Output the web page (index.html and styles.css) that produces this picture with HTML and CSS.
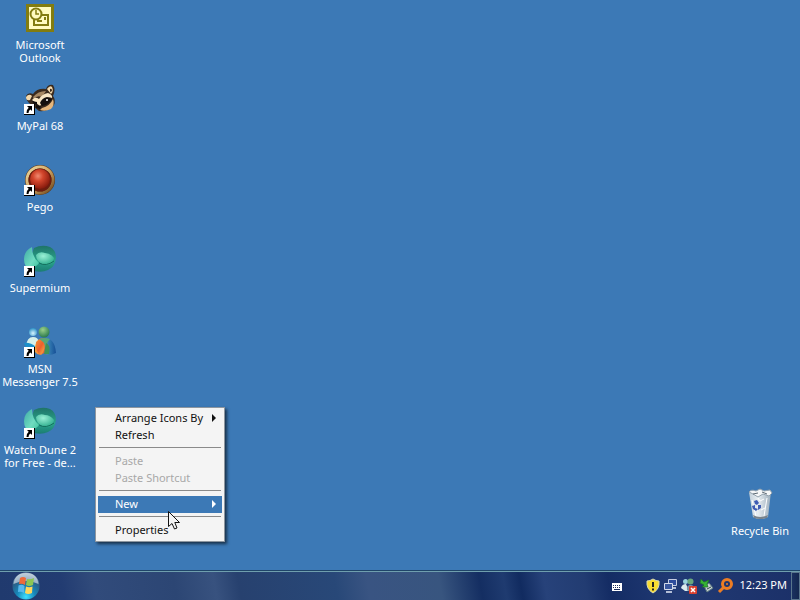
FILE: index.html
```html
<!DOCTYPE html>
<html lang="en">
<head>
<meta charset="utf-8">
<title>Desktop</title>
<link rel="stylesheet" href="styles.css">
</head>
<body>
<svg class="defs" aria-hidden="true">
  <defs>
    <radialGradient id="redBall" cx="40%" cy="35%" r="65%"><stop offset="0" stop-color="#f08a70"/><stop offset=".4" stop-color="#d3462c"/><stop offset="1" stop-color="#8a1c0e"/></radialGradient>
    <linearGradient id="ring" x1="0" y1="0" x2="1" y2="1"><stop offset="0" stop-color="#ecd9a0"/><stop offset=".5" stop-color="#cfa463"/><stop offset="1" stop-color="#6a4218"/></linearGradient>
    <linearGradient id="teal" x1="0" y1="0" x2="0" y2="1"><stop offset="0" stop-color="#1f7468"/><stop offset=".6" stop-color="#2aa48c"/><stop offset="1" stop-color="#1b7d72"/></linearGradient>
    <linearGradient id="leaf" x1="0" y1="0" x2="1" y2="1"><stop offset="0" stop-color="#3fa9a6"/><stop offset=".6" stop-color="#6fdcc0"/><stop offset="1" stop-color="#3cc39c"/></linearGradient>
    <radialGradient id="mint" cx="40%" cy="30%" r="70%"><stop offset="0" stop-color="#9af0d6"/><stop offset="1" stop-color="#2fae8e"/></radialGradient>
    <radialGradient id="greenHead" cx="40%" cy="30%" r="70%"><stop offset="0" stop-color="#9bd08a"/><stop offset="1" stop-color="#2b7a4c"/></radialGradient>
    <radialGradient id="blueHead" cx="50%" cy="65%" r="65%"><stop offset="0" stop-color="#d8f4ff"/><stop offset="1" stop-color="#2b8fc4"/></radialGradient>
    <linearGradient id="person" x1="0" y1="0" x2="1" y2="0"><stop offset="0" stop-color="#f6a33a"/><stop offset=".4" stop-color="#f0622a"/><stop offset=".6" stop-color="#3a86b8"/><stop offset="1" stop-color="#164f96"/></linearGradient>
    <linearGradient id="flame" x1="0" y1="0" x2="1" y2="1"><stop offset="0" stop-color="#f0903a"/><stop offset=".5" stop-color="#ee5f2c"/><stop offset="1" stop-color="#f6c04a"/></linearGradient>
    <radialGradient id="orb" cx="50%" cy="90%" r="85%"><stop offset="0" stop-color="#3fe0ff"/><stop offset=".4" stop-color="#1786b8"/><stop offset=".75" stop-color="#2b5f88"/><stop offset="1" stop-color="#8fa9bd"/></radialGradient>
    <linearGradient id="bin" x1="0" y1="0" x2="1" y2="0"><stop offset="0" stop-color="#c3d0da"/><stop offset=".4" stop-color="#e8eef2"/><stop offset="1" stop-color="#9eafbd"/></linearGradient>
    <symbol id="shortcut" viewBox="0 0 11 11">
      <rect width="11" height="11" fill="#000"/>
      <rect width="10" height="10" fill="#fff"/>
      <path d="M3 2h5v5L6.600 5.600Q4.500 6.600 4.500 9H2.500Q2 6 4.700 3.700Z" fill="#000"/>
    </symbol>
    <symbol id="supermium" viewBox="0 0 32 32">
      <path d="M10 3Q18 -1 26 2Q32 5 32 13Q31 22 24 25Q18 28 10 26Q4 18 10 3Z" fill="url(#teal)"/>
      <path d="M12 10Q15 6 21 8Q26 8 30 13Q29 19 24 20Q18 20 14 16Q12 13 12 10Z" fill="url(#mint)"/>
      <path d="M8 2Q0 6 0 14Q0 22 6 24Q12 22 15 18Q8 12 8 2Z" fill="url(#leaf)"/>
      <path d="M15 18Q22 22 30 16" stroke="#14705f" fill="none"/>
      <use href="#shortcut" x="0" y="21" width="11" height="11"/>
    </symbol>
  </defs>
</svg>

<main class="desktop">
  <nav class="icons" aria-label="Programs">
    <a class="icon" href="#outlook">
      <svg viewBox="0 0 32 32" aria-hidden="true">
        <rect x="2" y="2" width="28" height="28" fill="#827c10"/>
        <rect x="5" y="5" width="22" height="22" fill="#fffbc0"/>
        <rect x="10" y="13" width="14" height="10" fill="#fffbc0" stroke="#827c10" stroke-width="2"/>
        <path d="M13 19h5" stroke="#827c10" stroke-width="2"/>
        <path d="M20 15h2v3h-2z" fill="#827c10"/>
        <circle cx="12" cy="12" r="5.500" fill="#fffbc0" stroke="#827c10" stroke-width="2"/>
        <path d="M12 8v4h3" stroke="#827c10" stroke-width="1.500" fill="none"/>
      </svg>
      <span>Microsoft Outlook</span>
    </a>
    <a class="icon" href="#mypal">
      <svg viewBox="0 0 32 32" aria-hidden="true">
        <path d="M2 13Q4 9 9 11Q13 5 22 6Q24 1 29 2Q32 7 29 13Q32 17 30 22Q24 29 15 28L5 20Q2 17 2 13Z" fill="#3a2a1e"/>
        <path d="M2 14Q5 10 8 13L6 17Q2 18 2 14ZM23 6Q26 2 28 4Q30 8 27 11Z" fill="#f3d9ac"/>
        <path d="M26 6Q28 5 28 8L26 9Z" fill="#3a2a1e"/>
        <path d="M9 14Q14 8 22 8L18 14Q13 12 10 16Z" fill="#a58763"/>
        <path d="M8 17Q11 13 15 16Q18 11 24 10Q29 12 28 15Q24 13 21 16L16 23Q11 19 8 17Z" fill="#f8e6c5"/>
        <path d="M18 25Q26 23 29 16Q31 22 27 26Q21 29 16 27Z" fill="#e5b67c"/>
        <path d="M16 20Q18 15 23 14L28 16Q25 22 18 23Z" fill="#140f0d"/>
        <path d="M8 18L13 19L13 22L10 21Z" fill="#140f0d"/>
        <circle cx="23" cy="17" r="1" fill="#fff"/>
        <path d="M12 22L17 23L16 26L12 25Z" fill="#15100e"/>
        <use href="#shortcut" x="0" y="21" width="11" height="11"/>
      </svg>
      <span>MyPal 68</span>
    </a>
    <a class="icon" href="#pego">
      <svg viewBox="0 0 32 32" aria-hidden="true">
        <circle cx="16" cy="16" r="15" fill="#5a3818"/>
        <circle cx="16" cy="16" r="13" fill="none" stroke="url(#ring)" stroke-width="3"/>
        <circle cx="16" cy="16" r="11.500" fill="#6e1c0e"/>
        <circle cx="16" cy="15" r="10" fill="url(#redBall)"/>
        <use href="#shortcut" x="0" y="21" width="11" height="11"/>
      </svg>
      <span>Pego</span>
    </a>
    <a class="icon" href="#supermium-app">
      <svg viewBox="0 0 32 32" aria-hidden="true"><use href="#supermium"/></svg>
      <span>Supermium</span>
    </a>
    <a class="icon" href="#messenger">
      <svg viewBox="0 0 32 32" aria-hidden="true">
        <circle cx="9" cy="6" r="4" fill="url(#blueHead)"/>
        <path d="M2 20Q3 11 9 11Q14 11 15 16L12 25H4Z" fill="#d6efe9"/>
        <path d="M0 17Q6 16 12 21V27L2 21Z" fill="#1b8fca"/>
        <circle cx="20" cy="6" r="5.500" fill="url(#greenHead)"/>
        <path d="M11 26Q10 12 20 12Q31 12 32 27Q24 31 20 27Q15 31 11 26Z" fill="url(#person)"/>
        <path d="M15 13Q20 11 26 13Q22 17 22 22Q19 15 15 13Z" fill="#5aa676"/>
        <path d="M22 17Q27 19 25 28L20 28Z" fill="#3f9157"/>
        <path d="M12 16Q16 12 20 17Q22 23 17 29Q11 26 12 16Z" fill="url(#flame)"/>
        <use href="#shortcut" x="0" y="21" width="11" height="11"/>
      </svg>
      <span>MSN Messenger 7.5</span>
    </a>
    <a class="icon" href="#dune">
      <svg viewBox="0 0 32 32" aria-hidden="true"><use href="#supermium"/></svg>
      <span>Watch Dune 2 for Free - de...</span>
    </a>
  </nav>
  <div class="icons icons-end">
    <a class="icon" href="#bin-folder">
      <svg viewBox="0 0 32 32" aria-hidden="true">
        <path d="M5 4L27 4L24 29Q16 33 9 29Z" fill="url(#bin)"/>
        <path d="M5 4Q7 1 12 3L16 1L20 3L26 2L28 5L25 8L19 6L14 9L9 6Z" fill="#f4f6f7" stroke="#93a2ae"/>
        <path d="M9 6L14 5M18 4L23 6" stroke="#5e6a74"/>
        <path d="M8 12L12 28M23 10L20 28M14 10L16 13L20 11M17 22L21 20" stroke="#fff" fill="none"/>
        <path d="M9 27Q16 31 24 27L23 30Q16 32 10 30Z" fill="#78828b"/>
        <path d="M10 13L13 12L15 15L13 17L11 16ZM8 18L11 17L11 20L14 21L12 23L9 21ZM14 17L17 17L17 20L14 22Z" fill="#3f5cb4"/>
      </svg>
      <span>Recycle Bin</span>
    </a>
  </div>

  <div class="menu" role="menu">
    <button class="item more" role="menuitem">Arrange Icons By</button>
    <button class="item" role="menuitem">Refresh</button>
    <hr>
    <button class="item" role="menuitem" disabled>Paste</button>
    <button class="item" role="menuitem" disabled>Paste Shortcut</button>
    <hr>
    <button class="item more active" role="menuitem">New</button>
    <hr>
    <button class="item" role="menuitem">Properties</button>
  </div>

  <svg class="cursor" viewBox="0 0 12 19" aria-hidden="true">
    <path d="M.5.5V15.500L4 12.500L6.500 18L9 17L6.800 11.500H11.500Z" fill="#f4f4f4" stroke="#111"/>
  </svg>
</main>

<footer class="taskbar">
  <button class="start" aria-label="Start">
    <svg viewBox="0 0 28 28" aria-hidden="true">
      <circle cx="14" cy="14" r="13.500" fill="url(#orb)"/>
      <path d="M1.500 12Q3 1 14 1T26.500 12Q14 6 1.500 12Z" fill="#d5dfe8" opacity=".65"/>
      <path d="M8 6Q11 4 14 6L13 13Q10 11 7 12Z" fill="#ee6a3a"/>
      <path d="M15 7Q18 8 22 6L21 13Q17 15 14 13Z" fill="#8cc653"/>
      <path d="M6.500 13.500Q10 12 12.500 14L12 21Q9 19 6 20Z" fill="#58b8ee"/>
      <path d="M14 14.500Q17 16 20.500 14.500L20 21Q16 23 13 21Z" fill="#ffd65a"/>
    </svg>
  </button>
  <div class="tray">
    <button class="keyboard" aria-label="Input language">
      <svg viewBox="0 0 16 16" aria-hidden="true">
        <rect x="3" y="5" width="10" height="8" fill="#fff"/>
        <path d="M4 7.500h8M4 9.500h8" stroke="#1c2c58" stroke-dasharray="1 1"/>
        <path d="M5 11.500h6" stroke="#1c2c58"/>
      </svg>
    </button>
    <button aria-label="Security alert">
      <svg viewBox="0 0 16 16" aria-hidden="true">
        <path d="M8 1Q11 3 14 3Q15 11 8 15Q1 11 2 3Q5 3 8 1Z" fill="#f8dc30" stroke="#d8d9b0"/>
        <path d="M8 4v5M8 10.500v2" stroke="#222" stroke-width="2"/>
      </svg>
    </button>
    <button aria-label="Network">
      <svg viewBox="0 0 16 16" aria-hidden="true">
        <path d="M5.500 1.500h8v6h-8z" fill="#2e4d9c" stroke="#c5cde2"/>
        <path d="M1.500 5.500h8v6h-8z" fill="#39579f" stroke="#d4dbea"/>
        <path d="M3 14h6M10 10h3" stroke="#b3bed6" stroke-width="2"/>
      </svg>
    </button>
    <button aria-label="Messenger offline">
      <svg viewBox="0 0 16 16" aria-hidden="true">
        <circle cx="4.500" cy="3.500" r="2.500" fill="#9bd4de"/><circle cx="9.500" cy="3.500" r="3" fill="#69a77d"/>
        <path d="M0 10Q1 6 5 6L8 13H4Z" fill="#dcebee"/>
        <path d="M6 12Q5 7 10 7Q14 7 14 13H7Z" fill="#7b94a5"/>
        <rect x="8" y="8" width="8" height="8" rx="1" fill="#d84030"/>
        <path d="M10 10l4 4M14 10l-4 4" stroke="#fff" stroke-width="1.500"/>
      </svg>
    </button>
    <button aria-label="Safely remove hardware">
      <svg viewBox="0 0 16 16" aria-hidden="true">
        <path d="M5 8L10 5L14 10L8 14Z" fill="#c6d2d2" stroke="#5e7a80"/>
        <path d="M8 11l4-2" stroke="#31454c"/>
        <path d="M2 1L5 4L10 2L8 6L9 9L3 9L5 7L1 5Z" fill="#35b233" stroke="#1c7024" stroke-width=".7"/>
      </svg>
    </button>
    <button aria-label="Search">
      <svg viewBox="0 0 16 16" aria-hidden="true">
        <circle cx="10" cy="6" r="4.500" fill="none" stroke="#ed7d24" stroke-width="3"/>
        <circle cx="10" cy="6" r="1" fill="#ed7d24"/>
        <path d="M7 9L2 14" stroke="#ed7d24" stroke-width="3"/>
      </svg>
    </button>
    <time class="clock" datetime="12:23">12:23 PM</time>
    <button class="peek" aria-label="Show desktop"></button>
  </div>
</footer>
</body>
</html>
```
FILE: styles.css
```css
* {
  box-sizing: border-box;
}

body {
  margin: 0;
  min-height: 100vh;
  display: flex;
  flex-direction: column;
  background: #3c79b6;
  font: 11px/13px "Noto Sans", "Open Sans", sans-serif;
  color: #fff;
}

button {
  margin: 0;
  padding: 0;
  border: 0;
  background: none;
  color: inherit;
  font: inherit;
}

svg {
  display: block;
}

.defs {
  position: absolute;
  width: 0;
  height: 0;
}

.desktop {
  position: relative;
  flex: 1;
  display: flex;
  justify-content: space-between;
}

.icons {
  display: flex;
  flex-direction: column;
}

.icons-end {
  justify-content: flex-end;
  padding-bottom: 3px;
}

.icon {
  display: flex;
  flex-direction: column;
  align-items: center;
  gap: 4px;
  width: 80px;
  height: 81px;
  padding: 2px 1px 0;
  color: #fff;
  text-align: center;
  text-decoration: none;
}

.icon svg {
  width: 32px;
  height: 32px;
}

.menu {
  position: absolute;
  left: 95px;
  top: 407px;
  display: flex;
  flex-direction: column;
  width: 130px;
  padding: 2px;
  border: 1px solid #8d969f;
  background: #f4f4f4;
  box-shadow: 2px 2px 3px rgba(0, 0, 0, .6);
  color: #111;
}

.item {
  display: flex;
  align-items: center;
  justify-content: space-between;
  height: 17px;
  padding: 0 6px 2px 17px;
  white-space: nowrap;
}

.item:disabled {
  color: #a8a8a8;
}

.item.active {
  background: #3c79b6;
  color: #fff;
}

.more::after {
  content: "";
  border: 4px solid transparent;
  border-left-color: currentColor;
  border-right: 0;
}

.menu hr {
  width: auto;
  height: 1px;
  margin: 3px 1px 5px;
  border: 0;
  background: #8a8a8a;
}

.cursor {
  position: absolute;
  left: 168px;
  top: 511px;
  width: 12px;
  height: 19px;
}

.taskbar {
  display: flex;
  justify-content: space-between;
  height: 30px;
  border-top: 1px solid #1f4468;
  box-shadow: inset 0 1px #6f9fae;
  background: linear-gradient(80deg, #203a6e 0%, #223c72 8%, #314b7b 12%, #2c4674 22%, #38527f 27%, #27416f 30%, #284878 42%, #395482 46%, #38557f 55%, #142e62 60%, #1f3b70 63%, #112b60 65%, #27427a 68%, #223c72 73%, #142c64 76%, #213a74 84%, #1b3068 100%);
}

.start {
  width: 28px;
  height: 28px;
  margin: 1px 0 0 12px;
}

.tray {
  display: flex;
  align-items: center;
  gap: 2px;
}

.tray svg {
  width: 16px;
  height: 16px;
}

.keyboard {
  margin-right: 18px;
}

.clock {
  margin: 0 2px 2px 4px;
  white-space: nowrap;
}

.peek {
  align-self: stretch;
  width: 9px;
  margin-top: 1px;
  border: 1px solid #59758c;
  background: linear-gradient(90deg, #1a3160, #14274f);
}
```
